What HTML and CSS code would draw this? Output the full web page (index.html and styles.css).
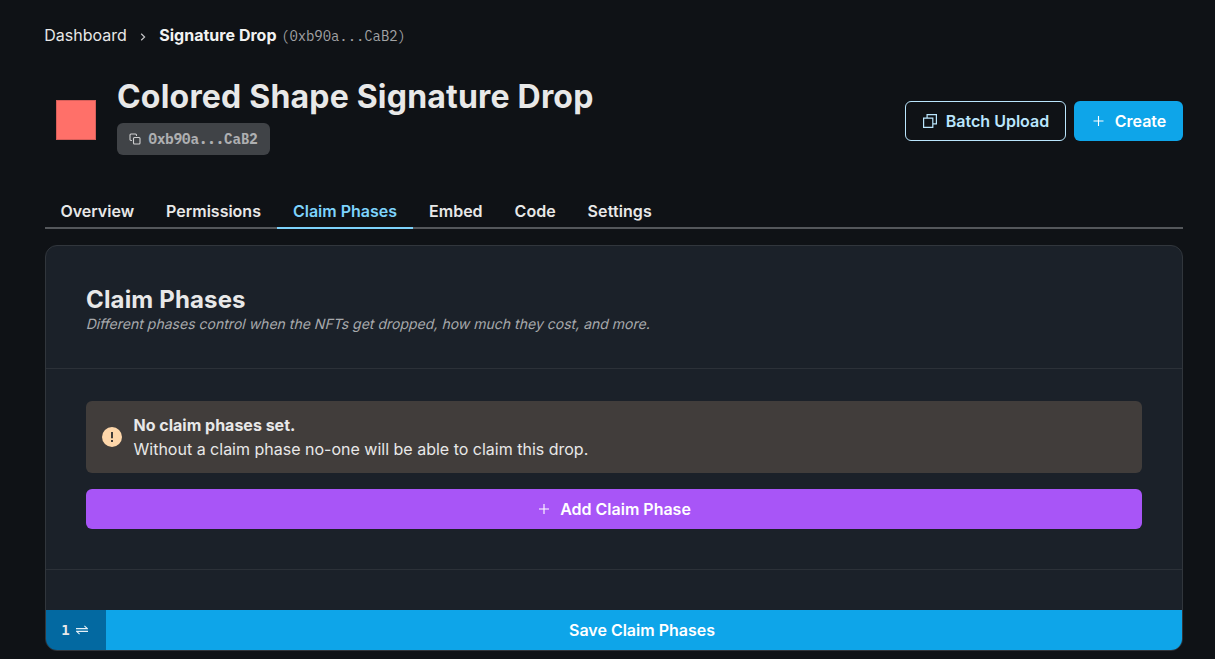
FILE: index.html
```html
<!DOCTYPE html>
<html lang="en">
<head>
<meta charset="utf-8">
<title>Colored Shape Signature Drop</title>
<link rel="stylesheet" href="styles.css">
</head>
<body>
<main class="page">
  <nav class="breadcrumb">
    <a class="crumb">Dashboard</a>
    <svg class="crumb-sep" width="6" height="8" viewBox="0 0 6 8" fill="none" stroke="#c4c5c7" stroke-width="1.2"><path d="M1.2 .8 L4.6 4 L1.2 7.2"/></svg>
    <a class="crumb current">Signature Drop</a>
    <span class="crumb-address">(0xb90a...CaB2)</span>
  </nav>
  <header class="header">
    <div class="logo"><div class="logo-shape"></div></div>
    <div class="heading">
      <h1 class="title">Colored Shape Signature Drop</h1>
      <button class="address">
        <svg width="12" height="12" viewBox="0 0 24 24" fill="none" stroke="#cfd0d1" stroke-width="2.2" stroke-linecap="round" stroke-linejoin="round"><rect x="9" y="9" width="13" height="13" rx="2"/><path d="M5 15H4a2 2 0 0 1-2-2V4a2 2 0 0 1 2-2h9a2 2 0 0 1 2 2v1"/></svg>
        <span>0xb90a...CaB2</span>
      </button>
    </div>
    <div class="actions">
      <button class="btn btn-outline">
        <svg width="16" height="16" viewBox="0 0 16 16" fill="none" stroke="#bae6fd" stroke-width="1.2"><path d="M1.6 5.1h9.2v9.2H1.6z"/><path d="M5.1 5V1.6h9.3v9.2H11"/></svg>
        <span>Batch Upload</span>
      </button>
      <button class="btn btn-primary">
        <svg width="16" height="16" viewBox="0 0 16 16" stroke="#fff" stroke-width="1.1"><path d="M7.5 3v10M2.5 8h10"/></svg>
        <span>Create</span>
      </button>
    </div>
  </header>
  <nav class="tabs">
    <a class="tab">Overview</a>
    <a class="tab">Permissions</a>
    <a class="tab active">Claim Phases</a>
    <a class="tab">Embed</a>
    <a class="tab">Code</a>
    <a class="tab">Settings</a>
  </nav>
  <section class="card">
    <div class="card-head">
      <h2 class="card-title">Claim Phases</h2>
      <p class="card-desc">Different phases control when the NFTs get dropped, how much they cost, and more.</p>
    </div>
    <div class="card-body">
      <div class="alert">
        <svg class="alert-icon" width="20" height="20" viewBox="0 0 20 20"><circle cx="10" cy="10" r="10" fill="#fed7aa"/><path d="M9 5h2v6.2H9zM9 13h2v2H9z" fill="#413d3b"/></svg>
        <div class="alert-text">
          <strong>No claim phases set.</strong>
          <span>Without a claim phase no-one will be able to claim this drop.</span>
        </div>
      </div>
      <button class="btn btn-add">
        <svg width="16" height="16" viewBox="0 0 16 16" stroke="#fff" stroke-width="1.1"><path d="M8 3v10M3 8h10"/></svg>
        <span>Add Claim Phase</span>
      </button>
    </div>
    <div class="card-foot">
      <div class="tx-count">
        <span>1</span>
        <svg width="12" height="10" viewBox="0 0 12 10" fill="none" stroke="#e6f1f8" stroke-width="1.1"><path d="M0 3.6h11.4L8.4 .8M12 6.4H.6l3 2.8"/></svg>
      </div>
      <button class="save">Save Claim Phases</button>
    </div>
  </section>
</main>
</body>
</html>
```

FILE: styles.css
```css
* { box-sizing: border-box; margin: 0; padding: 0; }
body {
  height: 659px;
  overflow: hidden;
  background: #0f1216;
  color: #e8e8e8;
  font-family: Inter, sans-serif;
  font-size: 16px;
  line-height: 24px;
}
button { border: 0; background: none; color: inherit; font: inherit; }
svg { flex: none; }
.page { padding: 23px 32px 0 45px; }
.breadcrumb { display: flex; align-items: center; height: 24px; margin-left: -0.7px; }
.crumb-sep { margin: 3px 13px 0 13.3px; }
.current { font-weight: 700; color: #f2f2f2; letter-spacing: 0.03px; }
.crumb-address {
  margin: 1px 0 0 4.5px;
  color: #a2a3a5;
  font: 14px/24px "IBM Plex Mono", "Liberation Mono", monospace;
  letter-spacing: -0.08px;
}
.header { display: flex; height: 80px; margin-top: 32px; }
.logo { display: flex; align-items: center; justify-content: center; width: 64px; height: 64px; margin: 9px 8px 0 0; padding-right: 2px; }
.logo-shape { width: 40px; height: 40px; background: #ff7069; border: 1px solid #d75f5a; }
.heading { display: flex; flex-direction: column; align-items: flex-start; gap: 9px; }
.title { font-size: 32px; line-height: 35px; font-weight: 700; letter-spacing: 0.2px; white-space: nowrap; }
.address {
  display: flex;
  align-items: center;
  gap: 7.5px;
  width: 153px;
  height: 32px;
  padding: 0 12px;
  border-radius: 6px;
  background: #404347;
  color: #aeafb1;
  font: bold 14px/32px "IBM Plex Mono", "Liberation Mono", monospace;
}
.actions { display: flex; gap: 8px; margin: 22px 0 0 auto; }
.btn {
  display: flex;
  align-items: center;
  justify-content: center;
  gap: 8px;
  height: 40px;
  border-radius: 6px;
  font-weight: 600;
}
.btn-outline { width: 161px; border: 1px solid #bae6fd; color: #bae6fd; }
.btn-primary { width: 109px; background: #0ea5e9; color: #fff; }
.tabs { display: flex; height: 34px; margin-top: 36px; border-bottom: 2px solid #54575b; }
.tab { height: 34px; padding: 4px 16px 0; font-weight: 600; }
.tab:first-child { padding-left: 15.4px; }
.tab:last-child { letter-spacing: 0.1px; }
.active { border-bottom: 2px solid #7dd3fc; color: #7dd3fc; }
.card {
  height: 406px;
  margin-top: 16px;
  overflow: hidden;
  border: 1px solid #31363c;
  border-radius: 12px;
  background: #1b2129;
}
.card-head { height: 123px; padding: 40px 40px 0; border-bottom: 1px solid #2c3138; }
.card-title { font-size: 24px; line-height: 28px; font-weight: 700; letter-spacing: 0.15px; }
/* Slants the upright letterforms, keeping the double-storey "a". */
.card-desc {
  margin: -1px 0 0 0.7px;
  color: #a7a9ac;
  font-size: 14px;
  line-height: 21px;
  letter-spacing: 0.015px;
  transform: skewX(-14deg);
}
.card-body { height: 201px; padding: 32px 40px 0; border-bottom: 1px solid #2c3138; }
.alert { display: flex; align-items: center; height: 72px; padding-left: 16px; border-radius: 6px; background: #413d3b; }
.alert-text { display: flex; flex-direction: column; margin-left: 11.5px; }
.alert-text strong { font-weight: 700; }
.btn-add { width: 100%; margin-top: 16px; padding-right: 1px; background: #a855f7; color: #fff; }
.card-foot { display: flex; margin-top: 40px; height: 40px; }
.tx-count {
  display: flex;
  align-items: center;
  justify-content: center;
  gap: 6px;
  width: 60px;
  padding-right: 3px;
  background: #0369a1;
  font: bold 14px/40px "DejaVu Sans Mono", monospace;
}
.save { flex: 1; padding-right: 4px; background: #0ea5e9; color: #fff; font-weight: 600; }
```
